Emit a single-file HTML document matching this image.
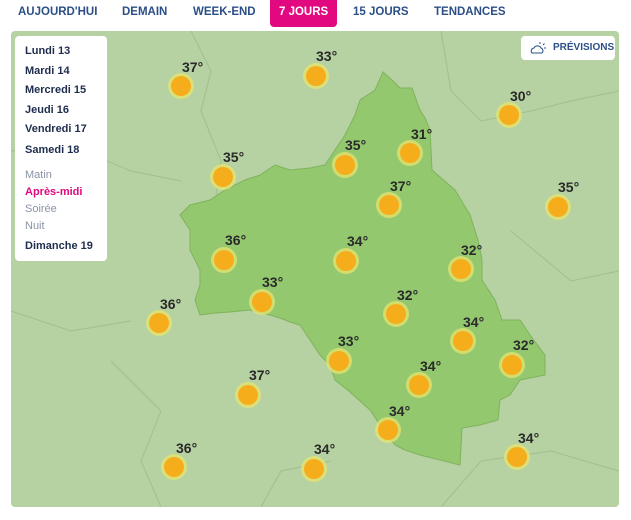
<!DOCTYPE html><html><head><style>
body{margin:0;width:631px;height:520px;background:#fff;font-family:"Liberation Sans",sans-serif;position:relative;overflow:hidden}
.nav{position:absolute;top:0;height:27px;font-size:11.5px;font-weight:bold;color:#2b4f86;line-height:24px}
.nav span{position:absolute;white-space:nowrap}
.act{background:#e2087f;color:#fff;border-radius:0 0 4px 4px;padding:0 9px;height:27px}
#map{position:absolute;left:11px;top:31px;width:608px;height:476px;background:#b6d1a2;border-radius:4px;overflow:hidden}
.side{position:absolute;left:15px;top:36px;width:92px;height:225px;background:#fff;border-radius:4px;font-size:11px;font-weight:bold;color:#1e2d4d}
.side div{position:absolute;left:10px;white-space:nowrap}
.l{font-weight:normal;color:#8a94a6}
.s{position:absolute;width:20px;height:20px;border-radius:50%;background:#f6ad1b;box-shadow:0 0 0 3px rgba(232,228,110,.75)}
.t{position:absolute;font-size:14px;font-weight:bold;color:#2a2a2a;white-space:nowrap}
.btn{position:absolute;left:521px;top:36px;width:94px;height:24px;background:#fff;border-radius:4px;font-size:10px;font-weight:bold;color:#2b4f86}
</style></head><body>
<div class="nav"><span style="left:18px">AUJOURD'HUI</span><span style="left:122px">DEMAIN</span><span style="left:193px">WEEK-END</span><span class="act" style="left:270px">7 JOURS</span><span style="left:353px">15 JOURS</span><span style="left:434px">TENDANCES</span></div>
<div id="map"><svg width="608" height="476" style="position:absolute;left:0;top:0">
<g fill="none" stroke="#9fc08e" stroke-width="1"><path d="M180 0 L200 40 L190 80 L210 130 L200 200 M0 120 L60 115 L120 140 L170 150 M430 0 L440 60 L470 90 L520 80 L560 70 L608 60 M500 200 L560 250 L608 240 M0 280 L60 300 L120 290 M100 330 L150 380 L130 430 L150 476 M250 476 L270 440 L320 430 M430 476 L470 430 L540 420 L608 440"/></g>
<path fill="#93c86f" stroke="#7fb35c" d="M372 41 L381 49 L389 57 L401 57 L409 79 L414 87 L419 99 L421 139 L444 159 L459 184 L467 209 L471 229 L471 249 L484 269 L491 289 L509 289 L519 304 L534 324 L534 344 L509 349 L499 364 L489 369 L487 389 L469 394 L451 397 L449 434 L429 429 L409 424 L394 419 L384 414 L369 394 L359 379 L339 361 L324 349 L319 334 L309 324 L299 309 L289 294 L279 291 L269 287 L259 284 L239 279 L219 281 L204 282 L189 284 L184 269 L189 254 L189 239 L179 219 L179 199 L169 184 L179 174 L199 169 L214 159 L234 149 L249 144 L264 134 L279 139 L299 137 L314 134 L324 119 L334 104 L344 84 L349 69 L364 59 Z"/>
</svg>
<div class="s" style="left:160px;top:45px"></div><div class="t" style="left:171px;top:28px">37°</div>
<div class="s" style="left:295px;top:35px"></div><div class="t" style="left:305px;top:17px">33°</div>
<div class="s" style="left:488px;top:74px"></div><div class="t" style="left:499px;top:57px">30°</div>
<div class="s" style="left:389px;top:112px"></div><div class="t" style="left:400px;top:95px">31°</div>
<div class="s" style="left:324px;top:124px"></div><div class="t" style="left:334px;top:106px">35°</div>
<div class="s" style="left:202px;top:136px"></div><div class="t" style="left:212px;top:118px">35°</div>
<div class="s" style="left:368px;top:164px"></div><div class="t" style="left:379px;top:147px">37°</div>
<div class="s" style="left:537px;top:166px"></div><div class="t" style="left:547px;top:148px">35°</div>
<div class="s" style="left:203px;top:219px"></div><div class="t" style="left:214px;top:201px">36°</div>
<div class="s" style="left:325px;top:220px"></div><div class="t" style="left:336px;top:202px">34°</div>
<div class="s" style="left:440px;top:228px"></div><div class="t" style="left:450px;top:211px">32°</div>
<div class="s" style="left:241px;top:261px"></div><div class="t" style="left:251px;top:243px">33°</div>
<div class="s" style="left:138px;top:282px"></div><div class="t" style="left:149px;top:265px">36°</div>
<div class="s" style="left:375px;top:273px"></div><div class="t" style="left:386px;top:256px">32°</div>
<div class="s" style="left:442px;top:300px"></div><div class="t" style="left:452px;top:283px">34°</div>
<div class="s" style="left:318px;top:320px"></div><div class="t" style="left:327px;top:302px">33°</div>
<div class="s" style="left:491px;top:324px"></div><div class="t" style="left:502px;top:306px">32°</div>
<div class="s" style="left:398px;top:344px"></div><div class="t" style="left:409px;top:327px">34°</div>
<div class="s" style="left:227px;top:354px"></div><div class="t" style="left:238px;top:336px">37°</div>
<div class="s" style="left:367px;top:389px"></div><div class="t" style="left:378px;top:372px">34°</div>
<div class="s" style="left:153px;top:426px"></div><div class="t" style="left:165px;top:409px">36°</div>
<div class="s" style="left:293px;top:428px"></div><div class="t" style="left:303px;top:410px">34°</div>
<div class="s" style="left:496px;top:416px"></div><div class="t" style="left:507px;top:399px">34°</div>
</div>
<div class="side">
<div style="top:9px">Lundi 13</div><div style="top:29px">Mardi 14</div><div style="top:48px">Mercredi 15</div><div style="top:68px">Jeudi 16</div><div style="top:87px">Vendredi 17</div><div style="top:108px">Samedi 18</div>
<div class="l" style="top:133px">Matin</div>
<div style="top:150px;color:#e2087f">Après-midi</div>
<div class="l" style="top:167px">Soirée</div>
<div class="l" style="top:184px">Nuit</div>
<div style="top:204px">Dimanche 19</div>
</div>
<div class="btn"><svg width="18" height="14" style="position:absolute;left:8px;top:5px" fill="none" stroke="#2b4f86" stroke-width="1"><path d="M3 12 H13 A3 3 0 0 0 12 7 A4 4 0 0 0 5 7 A3 3 0 0 0 3 12 Z M11 3 L11 1 M14 4 L15.5 2.5 M15 7 L17 7"/></svg><span style="position:absolute;left:32px;top:6px">PRÉVISIONS</span></div>
</body></html>
